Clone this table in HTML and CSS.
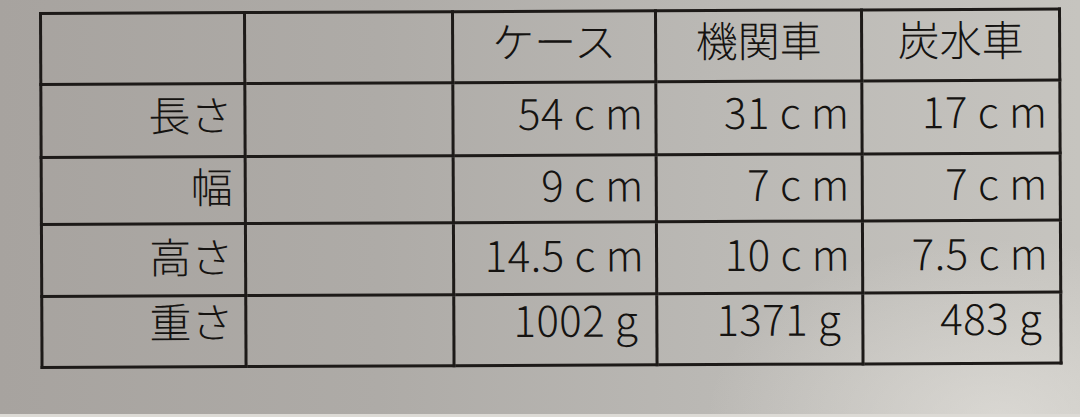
FILE: index.html
```html
<!DOCTYPE html>
<html lang="ja">
<head>
<meta charset="utf-8">
<title>寸法表</title>
<link rel="stylesheet" href="styles.css">
</head>
<body>
<div class="sheet">
  <table class="spec">
    <colgroup>
      <col class="c1"><col class="c2"><col class="c3"><col class="c4"><col class="c5">
    </colgroup>
    <tr class="r-head">
      <td></td><td></td>
      <td class="head">ケース</td>
      <td class="head">機関車</td>
      <td class="head">炭水車</td>
    </tr>
    <tr class="r1">
      <td class="label">長さ</td><td></td>
      <td class="num">54 c m</td>
      <td class="num">31 c m</td>
      <td class="num">17 c m</td>
    </tr>
    <tr class="r2">
      <td class="label">幅</td><td></td>
      <td class="num">9 c m</td>
      <td class="num">7 c m</td>
      <td class="num">7 c m</td>
    </tr>
    <tr class="r3">
      <td class="label">高さ</td><td></td>
      <td class="num">14.5 c m</td>
      <td class="num">10 c m</td>
      <td class="num">7.5 c m</td>
    </tr>
    <tr class="r4">
      <td class="label">重さ</td><td></td>
      <td class="num g">1002 g</td>
      <td class="num g2">1371 g</td>
      <td class="num g">483 g</td>
    </tr>
  </table>
</div>
</body>
</html>
```
FILE: styles.css
```css
html, body {
  margin: 0;
  padding: 0;
  width: 1080px;
  height: 417px;
  overflow: hidden;
}
body {
  background:
    radial-gradient(ellipse 420px 260px at 1000px 420px, rgba(235,233,228,0.55), rgba(235,233,228,0) 70%),
    linear-gradient(90deg, #a7a39f 0%, #aeaba7 35%, #bab8b4 65%, #c6c4bf 100%);
  font-family: "Noto Sans CJK JP", "Noto Sans", sans-serif;
  font-weight: 300;
  color: #151311;
}
.sheet {
  padding: 12px 0 0 39px;
  height: 402px;
  border-bottom: 3px solid #dcdad5;
}
.spec {
  border-collapse: collapse;
  table-layout: fixed;
  width: 1019px;
  transform: rotate(-0.25deg);
  transform-origin: 0 0;
}
.spec td {
  border: 3px solid #1d1a18;
  padding: 0 11px;
  font-size: 42px;
  line-height: 42px;
  white-space: nowrap;
  vertical-align: top;
}
.c1 { width: 204px; }
.c2 { width: 208px; }
.c3 { width: 203px; }
.c4 { width: 206px; }
.c5 { width: 198px; }
.r-head { height: 71px; }
.r1 { height: 73px; }
.r2 { height: 67px; }
.r3 { height: 72px; }
.r4 { height: 71px; }
.r-head td { padding-top: 6px; }
.r1 td { padding-top: 7px; }
.r2 td { padding-top: 6px; }
.r3 td { padding-top: 9px; }
.r4 td { padding-top: 2px; }
.head {
  text-align: center;
}
.label, .num {
  text-align: right;
}
.label { padding-right: 10px; }
.num { padding-right: 3px; letter-spacing: 0.5px; }
.num.g { padding-right: 17px; }
.num.g2 { padding-right: 20px; }
```
